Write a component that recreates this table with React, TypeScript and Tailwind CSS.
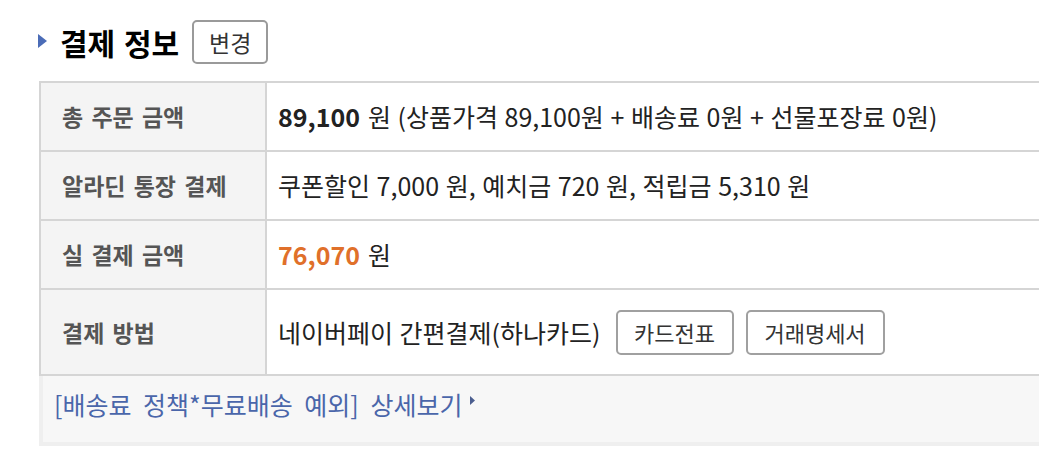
import React from "react";

const font = { fontFamily: '"Noto Sans CJK KR", "Noto Sans", sans-serif' };

function Row({ label, children, tall }: { label: string; children: React.ReactNode; tall?: boolean }) {
  return (
    <div className={`flex border-b-2 border-[#d5d5d5] ${tall ? "h-[86px]" : "h-[69px]"}`}>
      <div className="w-[226px] shrink-0 bg-[#f4f4f4] border-r-2 border-[#d5d5d5] flex items-center pl-[21px] text-[23px] leading-none font-bold text-[#555] [word-spacing:3px]">
        {label}
      </div>
      <div className="flex-1 flex items-center pl-[11px] text-[25px] leading-none text-[#222] [word-spacing:1px] whitespace-pre">
        {children}
      </div>
    </div>
  );
}

export default function App() {
  return (
    <div className="w-[1039px] h-[474px] overflow-hidden bg-white" style={font}>
      <div className="flex items-center pl-[38px] pt-[20px] h-[64px]">
        <svg width="9" height="14" viewBox="0 0 9 14" className="mr-[13px] mt-[-2px]">
          <polygon points="0,0 9,7 0,14" fill="#4b6cb7" />
        </svg>
        <span className="text-[30px] font-bold text-black leading-none [word-spacing:2px]">결제 정보</span>
        <button className="ml-[13px] w-[76px] h-[44px] border-2 border-[#9a9a9a] rounded-[5px] text-[23px] leading-none text-[#333] bg-white">
          변경
        </button>
      </div>
      <div className="ml-[39px] mt-[17px] w-[1100px]">
        <div className="border-l-2 border-t-2 border-[#d5d5d5]">
          <Row label="총 주문 금액">
            <span className="font-bold">89,100</span>
            <span className="ml-[8px]">원 (상품가격 89,100원 + 배송료 0원 + 선물포장료 0원)</span>
          </Row>
          <Row label="알라딘 통장 결제">
            <span>쿠폰할인 7,000 원, 예치금 720 원, 적립금 5,310 원</span>
          </Row>
          <Row label="실 결제 금액">
            <span className="font-bold text-[#e0702a]">76,070</span>
            <span className="ml-[8px]">원</span>
          </Row>
          <Row label="결제 방법" tall>
            <span>네이버페이 간편결제(하나카드)</span>
            <button className="ml-[15px] w-[118px] h-[45px] border-2 border-[#a0a0a0] rounded-[5px] text-[22px] leading-none text-[#333] bg-white">
              카드전표
            </button>
            <button className="ml-[12px] w-[139px] h-[45px] border-2 border-[#a0a0a0] rounded-[5px] text-[22px] leading-none text-[#333] bg-white">
              거래명세서
            </button>
          </Row>
        </div>
        <div className="h-[70px] bg-[#f7f7f7] border-l-4 border-b-4 border-[#efefef] pl-[11px] pt-[16px]">
          <span className="text-[25px] leading-none text-[#4a66aa] inline-flex items-center [word-spacing:6px]">
            [배송료 정책*무료배송 예외] 상세보기
            <svg width="5" height="9" viewBox="0 0 5 9" className="ml-[8px] mt-[-8px]">
              <polygon points="0,0 5,4.5 0,9" fill="#4b5e8f" />
            </svg>
          </span>
        </div>
      </div>
    </div>
  );
}
